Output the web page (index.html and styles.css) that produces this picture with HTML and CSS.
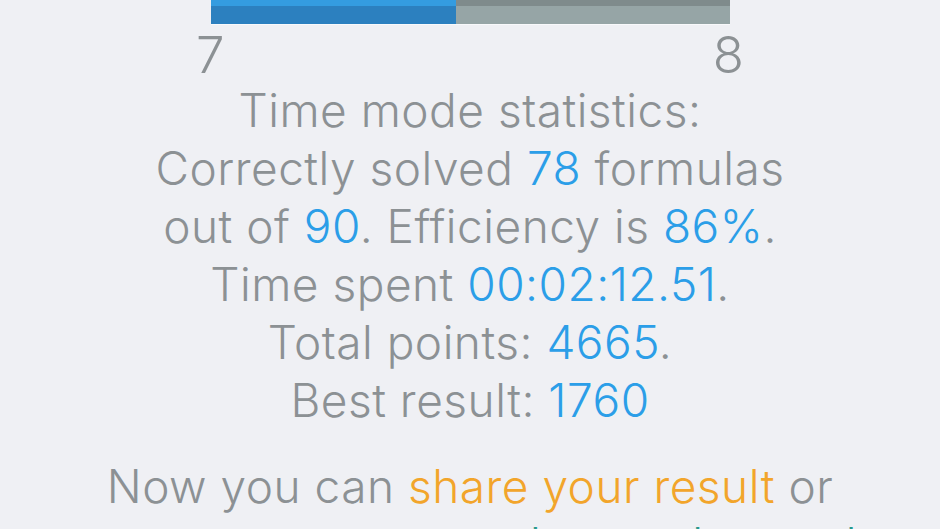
FILE: index.html
```html
<!DOCTYPE html>
<html>
<head>
<meta charset="utf-8">
<link rel="stylesheet" href="styles.css">
</head>
<body>
<div class="page">
  <div class="progress">
    <div class="fill" style="width:245px"></div>
    <div class="rest"></div>
  </div>
  <div class="labels"><span>7</span><span>8</span></div>
  <p class="stats">
    Time mode statistics:<br>
    Correctly solved <span class="blue">78</span> formulas<br>
    out of <span class="blue">90</span>. Efficiency is <span class="blue">86%</span>.<br>
    Time spent <span class="blue">00:02:12.51</span>.<br>
    Total points: <span class="blue">4665</span>.<br>
    Best result: <span class="blue">1760</span>
  </p>
  <p class="next">
    Now you can <span class="orange">share your result</span> or<br>
    start a new game or <span class="teal">choose the mode</span>
  </p>
</div>
</body>
</html>
```

FILE: styles.css
```css
html, body {
  margin: 0;
  padding: 0;
  background: #eff0f4;
  overflow: hidden;
}
.page {
  width: 940px;
  height: 529px;
  overflow: hidden;
  font-family: Inter, Roboto, "Liberation Sans", sans-serif;
  font-weight: 300;
  color: #8c9194;
  text-align: center;
}
.progress {
  width: 519px;
  height: 24px;
  margin: 0 auto;
  display: flex;
  border-bottom: 1px solid #f8f9fb;
}
.fill {
  background: linear-gradient(#349ce0 0, #349ce0 6px, #2c80bf 6px);
}
.rest {
  flex: 1;
  background: linear-gradient(#7f8b8c 0, #7f8b8c 6px, #96a5a6 6px);
}
.labels {
  width: 548px;
  margin: 4px auto 0;
  display: flex;
  justify-content: space-between;
  font-size: 51px;
  line-height: 52px;
}
.stats {
  margin: 0;
  font-size: 46px;
  line-height: 58px;
  letter-spacing: 0.5px;
}
.next {
  margin: 28px 0 0;
  font-size: 46px;
  line-height: 58px;
  letter-spacing: 0.5px;
}
.blue { color: #2b9ee8; }
.orange { color: #f2a52b; }
.teal { color: #27998b; }
```
